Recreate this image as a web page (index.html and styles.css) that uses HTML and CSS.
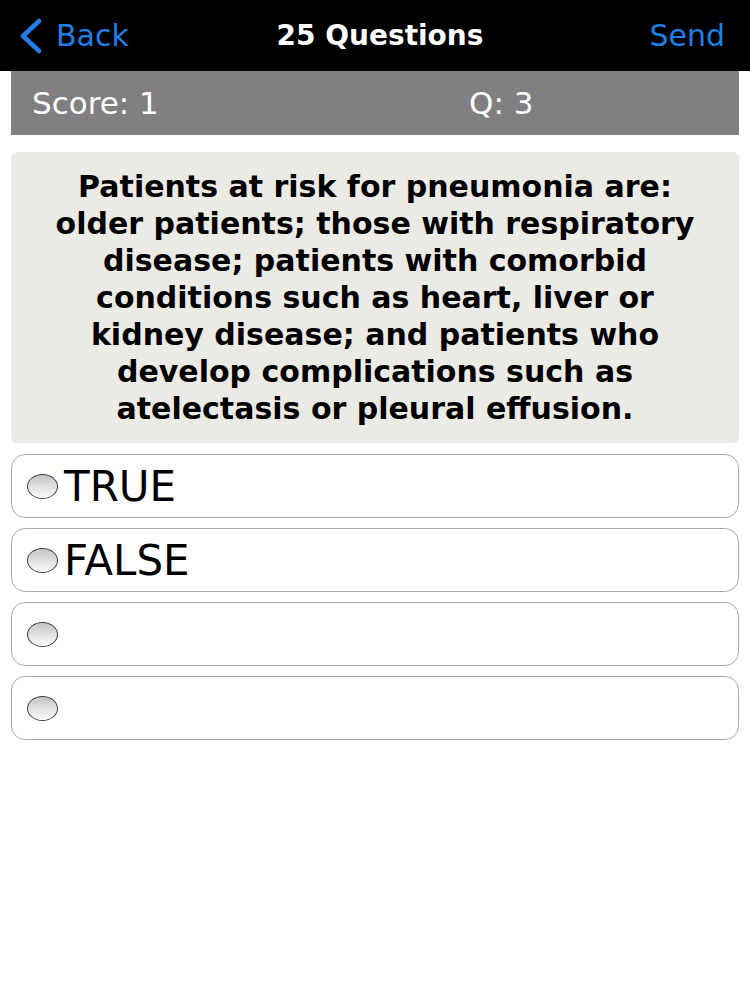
FILE: index.html
```html
<!DOCTYPE html>
<html>
<head>
<meta charset="utf-8">
<link rel="stylesheet" href="styles.css">
</head>
<body>
<header class="nav">
  <a class="nav-back">
    <svg class="chevron" width="26" height="36" viewBox="0 0 26 36"><path d="M22 3 L6 18 L22 33" fill="none" stroke="#1f7fe5" stroke-width="4.5" stroke-linecap="round" stroke-linejoin="round"/></svg>
    <span>Back</span>
  </a>
  <div class="nav-title">25 Questions</div>
  <a class="nav-send">Send</a>
</header>
<main class="content">
  <div class="scorebar">
    <span class="score">Score: 1</span>
    <span class="qnum">Q: 3</span>
  </div>
  <div class="question">Patients at risk for pneumonia are: older patients; those with respiratory disease; patients with comorbid conditions such as heart, liver or kidney disease; and patients who develop complications such as atelectasis or pleural effusion.</div>
  <ul class="options">
    <li class="option"><span class="radio"></span><span class="opt-text">TRUE</span></li>
    <li class="option"><span class="radio"></span><span class="opt-text">FALSE</span></li>
    <li class="option"><span class="radio"></span><span class="opt-text"></span></li>
    <li class="option"><span class="radio"></span><span class="opt-text"></span></li>
  </ul>
</main>
</body>
</html>
```
FILE: styles.css
```css
html, body {
  margin: 0;
  padding: 0;
  background: #ffffff;
  font-family: "DejaVu Sans", "Liberation Sans", sans-serif;
}

.nav {
  height: 71px;
  background: #000000;
  display: flex;
  align-items: center;
  justify-content: space-between;
  padding: 0 25px 0 17px;
  position: relative;
}

.nav-back {
  display: flex;
  align-items: center;
  gap: 13px;
  color: #1f7fe5;
  font-size: 30px;
}

.chevron {
  display: block;
}

.nav-title {
  position: absolute;
  left: 0;
  right: 0;
  text-align: center;
  color: #ffffff;
  font-weight: bold;
  font-size: 28px;
  padding-left: 10px;
  pointer-events: none;
}

.nav-send {
  color: #1f7fe5;
  font-size: 30px;
}

.content {
  margin: 0 11px;
}

.scorebar {
  height: 64px;
  background: #817f81;
  display: flex;
  align-items: center;
  color: #ffffff;
  font-size: 31px;
}

.score {
  margin-left: 21px;
  width: 437px;
}

.question {
  margin-top: 17px;
  background: #ebeae5;
  border-radius: 6px;
  padding: 16px 30px;
  text-align: center;
  font-weight: bold;
  font-size: 30px;
  line-height: 37px;
  color: #000000;
}

.options {
  list-style: none;
  margin: 11px 0 0 0;
  padding: 0;
  display: flex;
  flex-direction: column;
  gap: 10px;
}

.option {
  box-sizing: border-box;
  height: 64px;
  border: 1.5px solid #a8a8a8;
  border-radius: 14px;
  display: flex;
  align-items: center;
  padding-left: 15px;
  background: #ffffff;
}

.radio {
  width: 29px;
  height: 23px;
  border-radius: 50%;
  border: 1.5px solid #404040;
  background: linear-gradient(to bottom, #c4c4c4 0%, #e4e4e4 55%, #fafafa 100%);
  flex: none;
}

.opt-text {
  margin-left: 6px;
  font-size: 42px;
  color: #000000;
}
```
